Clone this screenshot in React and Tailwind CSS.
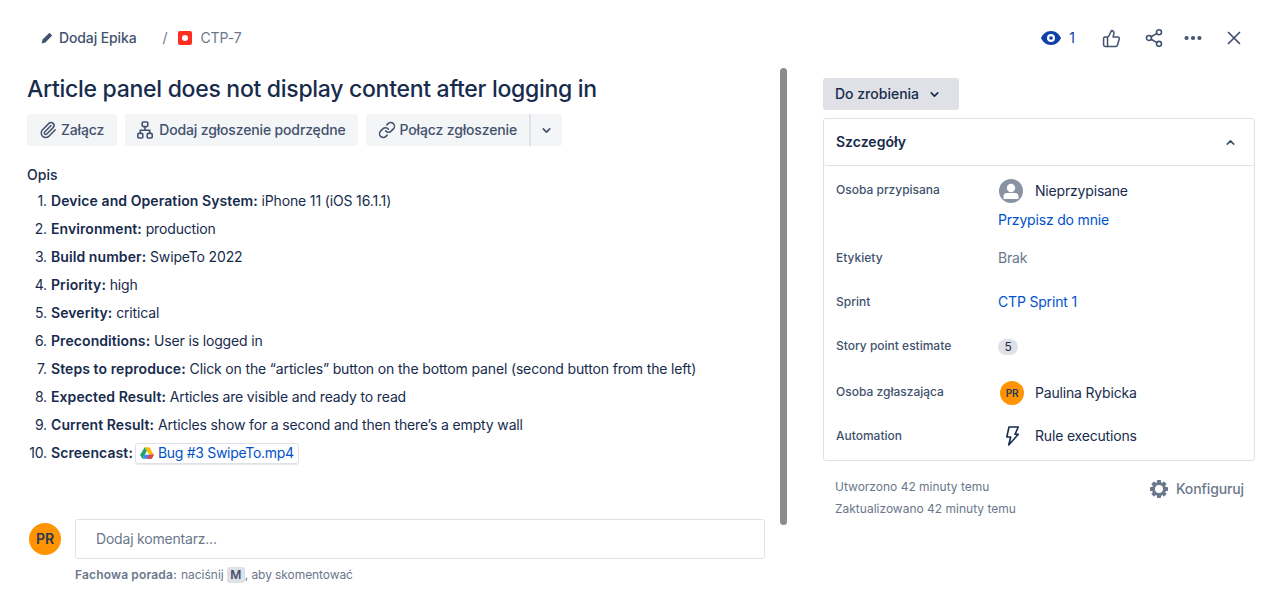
import { ChevronDown, ChevronUp, Link, MoreHorizontal, Paperclip, Share2, ThumbsUp, X } from "lucide-react";

const items = [
  ["Device and Operation System:", "iPhone 11 (iOS 16.1.1)"],
  ["Environment:", "production"],
  ["Build number:", "SwipeTo 2022"],
  ["Priority:", "high"],
  ["Severity:", "critical"],
  ["Preconditions:", "User is logged in"],
  ["Steps to reproduce:", "Click on the “articles” button on the bottom panel (second button from the left)"],
  ["Expected Result:", "Articles are visible and ready to read"],
  ["Current Result:", "Articles show for a second and then there’s a empty wall"],
];

function DriveIcon() {
  return (
    <svg width="14" height="12" viewBox="0 0 14 12" className="shrink-0">
      <path d="M4.7 0.2h4.6l4.6 7.6h-4.6z" fill="#ffba00" />
      <path d="M4.7 0.2L0.1 7.9l2.3 3.9 4.5-7.8z" fill="#1fa463" />
      <path d="M4.6 7.8h9.3l-2.3 4H2.4z" fill="#4285f4" />
      <path d="M9.3 7.8h4.6l-2.3 4H6.9z" fill="#ea4335" />
    </svg>
  );
}

function Hierarchy() {
  return (
    <svg width="16" height="18" viewBox="0 0 16 18" fill="none" stroke="#42526e" strokeWidth="1.6" className="mr-[2px]">
      <rect x="5.2" y="1" width="5.6" height="4.6" rx="1" />
      <rect x="0.8" y="12.4" width="5" height="4.6" rx="1" />
      <rect x="10.2" y="12.4" width="5" height="4.6" rx="1" />
      <path d="M8 5.6v3.6M3.3 12.4V9.2h9.4v3.2" />
    </svg>
  );
}

function Gear() {
  const teeth = [0, 45, 90, 135, 180, 225, 270, 315];
  return (
    <svg width="20" height="20" viewBox="0 0 20 20" className="mr-[7px]">
      {teeth.map((a) => (
        <rect key={a} x="8" y="1" width="4" height="4" rx="0.6" fill="#6b778c" transform={`rotate(${a} 10 10)`} />
      ))}
      <circle cx="10" cy="10" r="5.5" fill="none" stroke="#6b778c" strokeWidth="3" />
    </svg>
  );
}

function Bolt() {
  return (
    <svg width="14" height="20" viewBox="0 0 14 20" fill="none" stroke="#172b4d" strokeWidth="1.6" strokeLinejoin="round" className="ml-2 shrink-0">
      <path d="M3 1h9.300L9 8.300h3.300L2.700 19l2-8H.8z" />
    </svg>
  );
}

function Btn({ icon, children, className = "rounded-[3px]" }) {
  return (
    <div className={`flex h-8 items-center gap-1 bg-[#f4f5f7] px-3 text-sm font-medium tracking-[-0.15px] text-[#42526e] ${className}`}>
      {icon}
      <span>{children}</span>
    </div>
  );
}

function Row({ label, className, children }) {
  return (
    <div className={`flex items-start ${className}`}>
      <div className="w-[162px] shrink-0 text-xs font-medium leading-4 text-[#42526e]">{label}</div>
      <div className="min-w-0 flex-1 text-sm leading-4 tracking-[-0.18px] text-[#172b4d]">{children}</div>
    </div>
  );
}

function Avatar({ size, text }) {
  return (
    <div className={`flex shrink-0 items-center justify-center rounded-full bg-[#ff9400] font-semibold text-[#253858] ${size} ${text}`}>
      PR
    </div>
  );
}

export default function App() {
  return (
    <div className="h-[594px] w-[1272px] overflow-hidden bg-white font-['Inter',sans-serif] text-[#172b4d]">
      {/* top bar */}
      <div className="flex h-[68px] items-start justify-between pl-[41px] pr-[27px] pt-[28px]">
        <div className="flex h-5 items-center text-sm tracking-[-0.12px] text-[#42526e]">
          <svg width="12" height="12" viewBox="0 0 12 12" className="mr-[6px]" fill="#42526e">
            <path d="M8.400 .8l2.800 2.800-6.800 6.800-3.800 1 1-3.800z" />
          </svg>
          <span className="font-medium">Dodaj Epika</span>
          <span className="ml-[26px] text-[#6b778c]">/</span>
          <div className="ml-[11px] flex h-[14px] w-[14px] items-center justify-center rounded-[2px] bg-[#ff2d20]">
            <div className="h-[6px] w-[6px] rounded-full bg-white" />
          </div>
          <span className="ml-2 text-[#6b778c]">CTP-7</span>
        </div>
        <div className="flex h-5 items-center text-[#42526e]">
          <svg width="22" height="16" viewBox="0 0 22 16">
            <path fillRule="evenodd" fill="#0f3fa8" d="M11 1c5 0 8.600 3.500 10 7-1.400 3.500-5 7-10 7S2.400 11.500 1 8c1.400-3.500 5-7 10-7zm0 3a4 4 0 100 8 4 4 0 000-8zm0 2.200a1.800 1.800 0 110 3.600 1.800 1.800 0 010-3.600z" />
          </svg>
          <span className="ml-[7px] text-sm text-[#0f3fa8]">1</span>
          <ThumbsUp size={19} strokeWidth={1.9} className="ml-[27px]" />
          <Share2 size={20} strokeWidth={1.9} className="ml-[23px]" />
          <MoreHorizontal size={22} strokeWidth={2.6} className="ml-[18px]" />
          <X size={22} strokeWidth={1.9} className="ml-[19px]" />
        </div>
      </div>

      <div className="flex">
        {/* left column */}
        <div className="w-[780px] shrink-0 pl-[27px]">
          <h1 className="mt-[5px] text-[23px] font-medium leading-8 tracking-[-0.29px] text-[#172b4d]">
            Article panel does not display content after logging in
          </h1>
          <div className="mt-[9px] flex items-center gap-2">
            <Btn className="rounded-[3px] pr-[13px]" icon={<Paperclip size={18} strokeWidth={2} />}>Załącz</Btn>
            <Btn icon={<Hierarchy />}>Dodaj zgłoszenie podrzędne</Btn>
            <div className="flex">
              <Btn className="rounded-l-[3px]" icon={<Link size={18} strokeWidth={2} />}>Połącz zgłoszenie</Btn>
              <div className="flex h-8 w-[33px] items-center justify-center rounded-r-[3px] border-l-2 border-[#dfe1e6] bg-[#f4f5f7]">
                <ChevronDown size={13} strokeWidth={3} className="text-[#42526e]" />
              </div>
            </div>
          </div>

          <div className="mt-[19px] text-sm font-medium leading-5">Opis</div>
          <ol className="mt-[2px] text-sm tracking-[-0.15px] text-[#172b4d]">
            {items.map(([k, v], i) => (
              <li key={k} className="flex h-7 items-center">
                <span className="w-5 shrink-0 text-right">{i + 1}.</span>
                <span className="ml-1"><b className="font-semibold tracking-[0.08px]">{k}</b> {v}</span>
              </li>
            ))}
            <li className="flex h-7 items-center">
              <span className="w-5 shrink-0 text-right">10.</span>
              <b className="ml-1 font-semibold tracking-[0.08px]">Screencast:</b>
              <span className="ml-[2px] flex h-[21px] items-center gap-1 rounded-[3px] border border-[#dfe1e6] px-[4px] tracking-[-0.3px] text-[#0052cc] shadow-[0_1px_1px_rgba(9,30,66,0.1)]">
                <DriveIcon />
                Bug #3 SwipeTo.mp4
              </span>
            </li>
          </ol>

          <div className="mt-[52px] ml-[2px] flex items-start">
            <Avatar size="mt-[4px] h-8 w-8" text="text-sm" />
            <div className="ml-[14px] flex h-10 w-[690px] items-center rounded-[3px] border border-[#dfe1e6] pl-5 text-sm tracking-[-0.2px] text-[#6b778c]">
              Dodaj komentarz...
            </div>
          </div>
          <div className="ml-[48px] mt-[7px] flex h-[18px] items-center text-xs text-[#6b778c]">
            <b className="font-semibold tracking-[0.15px]">Fachowa porada:</b>
            <span className="ml-1">naciśnij</span>
            <span className="ml-[3px] flex h-[16px] w-[18px] items-center justify-center rounded-[3px] bg-[#dfe1e6] font-semibold text-[#42526e]">M</span>
            <span className="tracking-[-0.08px]">, aby skomentować</span>
          </div>
        </div>

        {/* scrollbar thumb */}
        <div className="h-[457px] w-[7px] shrink-0 rounded-full bg-[#8c8c8c]" />

        {/* right column */}
        <div className="ml-[36px] w-[432px] shrink-0">
          <div className="mt-[10px] flex h-8 w-[136px] items-center rounded-[3px] bg-[#dfe1e6] pl-3 text-sm font-medium text-[#172b4d]">
            Do zrobienia
            <ChevronDown size={13} strokeWidth={3} className="ml-[9px]" />
          </div>
          <div className="mt-2 rounded-[3px] border border-[#dfe1e6]">
            <div className="flex h-[47px] items-center justify-between rounded-[3px] border-b border-[#dfe1e6] pl-3 pr-[17px] text-sm font-semibold">
              Szczegóły
              <ChevronUp size={13} strokeWidth={3} className="text-[#42526e]" />
            </div>
            <div className="px-3 pb-4">
              <Row label="Osoba przypisana" className="pt-4">
                <div className="-mt-[3px] ml-px flex h-6 items-center">
                  <svg width="24" height="24" viewBox="0 0 24 24">
                    <circle cx="12" cy="12" r="12" fill="#8993a4" />
                    <circle cx="12" cy="9" r="4.200" fill="#fff" />
                    <path d="M4.500 20v-3a3.500 3.500 0 013.500-3h8a3.500 3.500 0 013.500 3v3z" fill="#fff" />
                  </svg>
                  <span className="ml-3">Nieprzypisane</span>
                </div>
                <div className="mt-[7px] leading-5 text-[#0052cc]">Przypisz do mnie</div>
              </Row>
              <Row label="Etykiety" className="mt-5">
                <span className="text-[#6b778c]">Brak</span>
              </Row>
              <Row label="Sprint" className="mt-7">
                <span className="text-[#0052cc]">CTP Sprint 1</span>
              </Row>
              <Row label="Story point estimate" className="mt-7">
                <span className="mt-px flex h-4 w-5 items-center justify-center rounded-full bg-[#dfe1e6] text-xs text-[#172b4d]">5</span>
              </Row>
              <Row label="Osoba zgłaszająca" className="mt-[29px]">
                <div className="-mt-[3px] ml-[2px] flex h-6 items-center">
                  <Avatar size="h-6 w-6" text="text-[10px]" />
                  <span className="ml-[11px]">Paulina Rybicka</span>
                </div>
              </Row>
              <Row label="Automation" className="mt-[23px]">
                <div className="flex h-4 items-center">
                  <Bolt />
                  <span className="ml-[15px]">Rule executions</span>
                </div>
              </Row>
            </div>
          </div>
          <div className="mt-[15px] flex items-start justify-between pl-3 pr-[11px]">
            <div className="text-xs leading-[22px] text-[#6b778c]">
              <div>Utworzono 42 minuty temu</div>
              <div>Zaktualizowano 42 minuty temu</div>
            </div>
            <div className="mt-[2px] flex h-[22px] items-center text-sm font-medium tracking-[-0.12px] text-[#6b778c]">
              <Gear />
              Konfiguruj
            </div>
          </div>
        </div>
      </div>
    </div>
  );
}
